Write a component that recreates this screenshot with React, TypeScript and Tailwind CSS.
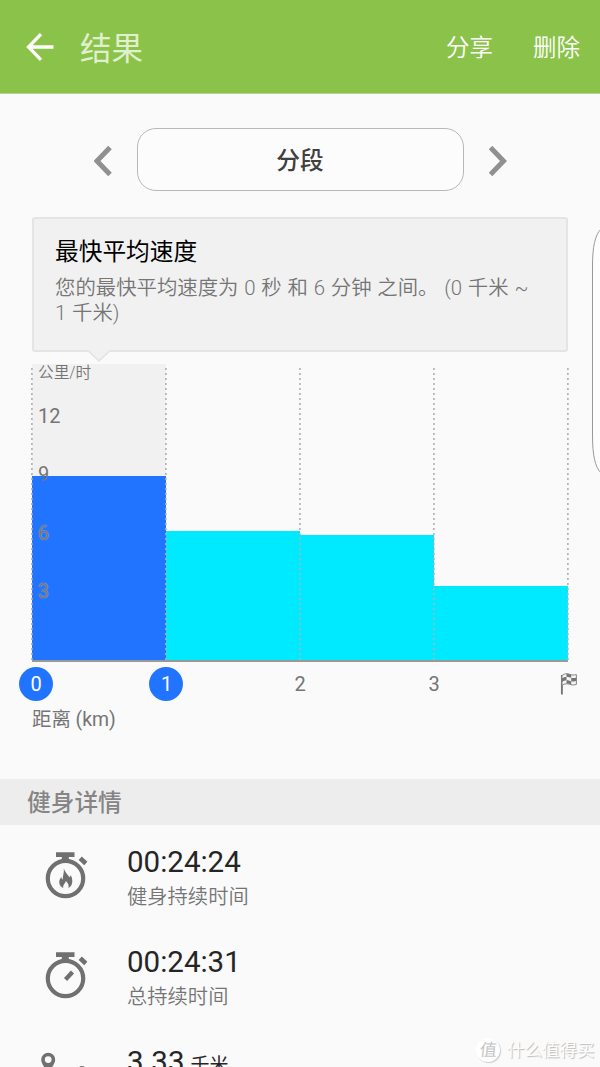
import { ReactNode } from "react";
import { clsx } from "clsx";

const segments = [
  { height: 184, active: true },
  { height: 129.5, active: false },
  { height: 125.5, active: false },
  { height: 74, active: false },
];

const FlagIcon = () => (
  <svg width="18" height="22" viewBox="0 0 18 22" fill="none">
    <path d="M1.9 2v19.5" stroke="#757575" strokeWidth="1.9" />
    <path
      d="M2 2.6C5 0 8 .4 10 1.4s4 .6 6.4.2v9.8c-3 .9-5 .6-7-.2s-4-.7-7.4 1z"
      fill="#f4f4f4"
      stroke="#858585"
      strokeWidth="1"
    />
    <path
      d="M6.500.7c2-.2 3 .7 4.700 1.100v3.100C9.500 4.500 8.500 3.600 6.500 3.800zM2 5.500c1.500-1.100 3-1.600 4.500-1.700v3.400C5 7.300 3.500 7.800 2 8.900zM11.200 4.900c1.800.4 3.500.2 5-.1v3.300c-1.500.4-3.200.5-5 .1zM6.500 7.200c2-.2 3 .6 4.700 1v3.400c-1.700-.5-2.700-1.200-4.700-1z"
      fill="#757575"
    />
  </svg>
);

const Stopwatch = ({ children }: { children: ReactNode }) => (
  <svg width="44" height="48" viewBox="0 0 44 48" fill="none">
    <path d="M11 .3h18.500v4.700h-5.700v4h-7V5H11z" fill="#707070" />
    <circle cx="20.500" cy="26.500" r="17.700" stroke="#707070" strokeWidth="4.200" />
    <path d="M35.200 6.300l5.600 5.200" stroke="#707070" strokeWidth="4.600" />
    {children}
  </svg>
);

const Detail = ({
  value,
  unit,
  label,
  icon,
}: {
  value: string;
  unit?: string;
  label?: string;
  icon: ReactNode;
}) => (
  <div className="flex h-[100px] shrink-0">
    <div className="w-[127px] pt-[27px] pl-[45px]">{icon}</div>
    <div className="pt-[19px]">
      <p className="text-[29.500px] leading-[36px] text-[#252525]">
        {value}
        {unit && <span className="ml-[6px] text-[19px]">{unit}</span>}
      </p>
      {label && (
        <p className="mt-[2px] text-[20.300px] leading-[30px] font-[350] text-[#757575]">
          {label}
        </p>
      )}
    </div>
  </div>
);

const Header = () => (
  <header className="flex h-[94px] shrink-0 items-center border-b border-[#b5cf96] bg-[#8bc34a] pr-5 pl-[26px] text-white">
    <svg width="28" height="28" viewBox="0 0 28 28" fill="none" stroke="white" strokeWidth="3.300">
      <path d="M27.500 14H3M15 1.200L2.500 14 15 26.800" />
    </svg>
    <h1 className="ml-[26px] pt-[6px] text-[31.500px] leading-none text-[#e0efce]">结果</h1>
    <nav className="ml-auto flex gap-10 pt-[5px] text-[23.500px] leading-none font-[350]">
      <span>分享</span>
      <span>删除</span>
    </nav>
  </header>
);

const Chart = () => (
  <div className="mx-8">
    <div className="relative h-[298px]">
      <div className="absolute inset-y-0 left-0 w-1/4 bg-[#f1f1f1]" />
      <div className="relative grid h-full grid-cols-4 items-end border-b-2 border-[#999]">
        {segments.map(({ height, active }, i) => (
          <div
            key={i}
            className={clsx(active ? "bg-[#2174ff]" : "bg-[#00eaff]")}
            style={{ height }}
          />
        ))}
      </div>
      <svg className="absolute top-0 -left-px" width="538" height="298">
        {[0, 1, 2, 3, 4].map((n) => (
          <path
            key={n}
            d={`M${n * 134 + 0.9} 4V296`}
            stroke="#b0b0b0"
            strokeWidth="1.600"
            strokeDasharray="2 3"
          />
        ))}
      </svg>
      <div className="absolute top-0 left-[6px] text-xl font-[370] text-[#757575]">
        <p className="h-[37px] text-[15.700px] leading-[17px] font-[350]">公里/时</p>
        {[12, 9, 6, 3].map((n) => (
          <p
            key={n}
            className={clsx("h-[58.300px] leading-[30px]", n < 9 && "[text-shadow:0_0_1px_#ccc]")}
          >
            {n}
          </p>
        ))}
      </div>
    </div>
    <div className="-mx-[67px] mt-[5px] grid h-[34px] grid-cols-5 place-items-center text-xl font-[370] text-[#757575]">
      <span className="ml-[8px] flex size-[33.500px] items-center justify-center rounded-full bg-[#2174ff] text-white">0</span>
      <span className="flex size-[33.500px] items-center justify-center rounded-full bg-[#2174ff] pl-px text-white">1</span>
      <span>2</span>
      <span>3</span>
      <span className="ml-[2px]"><FlagIcon /></span>
    </div>
    <p className="mt-[6px] text-[19.400px] leading-[26px] font-[370] text-[#757575]">距离 (km)</p>
  </div>
);

export default function App() {
  return (
    <main className="relative flex h-[1067px] w-[600px] flex-col overflow-hidden bg-[#fafafa] font-[Roboto,'Noto_Sans_CJK_SC',sans-serif]">
      <Header />

      <div className="mt-[34px] flex shrink-0 items-center justify-center gap-[25px]">
        <svg className="mt-[3px]" width="18" height="30" viewBox="0 0 18 30" fill="none" stroke="#909090" strokeWidth="5">
          <path d="M16 1.500L3 15l13 13.500" />
        </svg>
        <div className="flex h-[63px] w-[327px] items-center justify-center rounded-[19px] border border-[#b8b8b8] bg-[#fcfcfc] pt-[4px] text-[23.700px] font-medium text-[#404040]">
          分段
        </div>
        <svg className="mt-[3px]" width="18" height="30" viewBox="0 0 18 30" fill="none" stroke="#909090" strokeWidth="5">
          <path d="M1.500 1.500l13 13.500-13 13.500" />
        </svg>
      </div>

      <div className="relative mx-8 mt-[26px] mb-[12px] h-[135px] shrink-0 rounded-[3px] border-2 border-[#e4e4e4] bg-[#f1f1f1] pt-[17px] pl-[21px]">
        <h2 className="text-[23.700px] leading-[32px] text-black">最快平均速度</h2>
        <p className="mt-[8px] text-[20.400px] leading-[25px] font-[350] [word-spacing:0.8px] text-[#757575]">
          您的最快平均速度为 0 秒 和 6 分钟 之间。 (0 千米 ~<br />1 千米)
        </p>
        <svg className="absolute top-[131px] left-[54px]" width="22" height="12" fill="#f1f1f1">
          <path d="M0 0L11 10.500 22 0" />
          <path d="M.5 1L11 10.800 21.500 1" fill="none" stroke="#e4e4e4" strokeWidth="1.600" />
        </svg>
      </div>

      <Chart />

      <h2 className="mt-[46px] h-[46px] shrink-0 bg-[#ededed] pt-px pl-[27px] text-[23.700px] leading-[46px] font-medium text-[#858585]">
        健身详情
      </h2>

      <Detail
        value="00:24:24"
        label="健身持续时间"
        icon={
          <Stopwatch>
            <path
              d="M18.800 16.500c1.200 4 3.800 5.700 5.700 8.700.8-.7 1.100-1.300 1.200-2.200 2.600 4.800 2.200 10.700-2.200 13 .6-3-.6-5.300-2.700-7-.5 2.700-3.200 3.700-2.500 7-4.800-2-5.200-7.500-2-11 .3 1.500.8 2.200 1.500 2.500-.3-4 1.600-6.600 1-11z"
              fill="#707070"
            />
          </Stopwatch>
        }
      />
      <Detail
        value="00:24:31"
        label="总持续时间"
        icon={
          <Stopwatch>
            <path d="M20.500 27.500l7-7.500" stroke="#707070" strokeWidth="4.300" />
          </Stopwatch>
        }
      />
      <Detail
        value="3.33"
        unit="千米"
        icon={
          <svg className="-ml-1 block" width="44" height="48" viewBox="0 0 44 48" fill="none">
            <path
              fillRule="evenodd"
              d="M7.200.8a7 7 0 0 0-7 7c0 5 7 12 7 12s7-7 7-12a7 7 0 0 0-7-7zm0 3.400a3.400 3.400 0 1 1 0 6.800 3.400 3.400 0 0 1 0-6.800z"
              fill="#707070"
            />
            <circle cx="41" cy="17.500" r="3.500" fill="#707070" />
          </svg>
        }
      />

      {/* edge panel handle */}
      <svg className="absolute top-[228px] left-[591px]" width="9" height="246">
        <path d="M10 1C4 7 1.500 19 1.500 38V207c0 20 2.500 32 8.500 38" fill="#fdfdfd" stroke="#999" />
      </svg>

      <div className="absolute top-[1037px] left-[476px] flex items-center gap-[7px] text-[17.500px] leading-[26px] whitespace-nowrap text-[#fdfdfd] [text-shadow:1px_1px_1px_#bbb]">
        <span className="flex size-6 items-center justify-center rounded-full bg-white text-[17px] text-[#c4c4c4] shadow-[1px_1px_1px_#ccc] [text-shadow:none]">
          <i className="-skew-x-6 not-italic">值</i>
        </span>
        什么值得买
      </div>
    </main>
  );
}
